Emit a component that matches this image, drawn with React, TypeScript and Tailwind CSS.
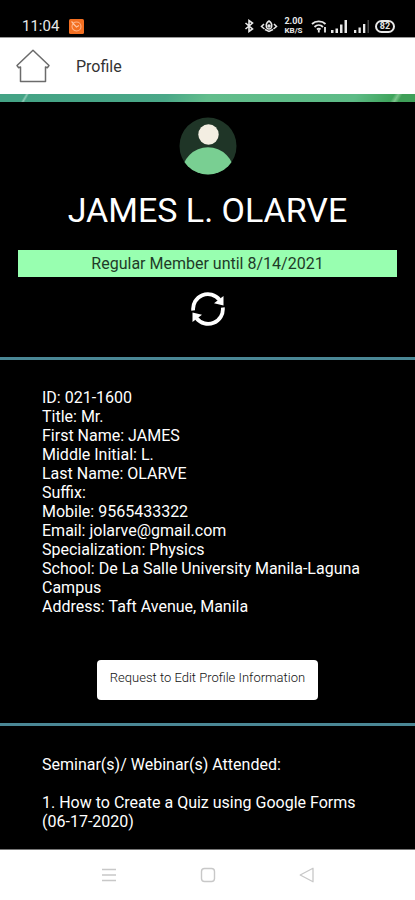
import React from 'react';

interface Member {
  id: string;
  title: string;
  firstName: string;
  middleInitial: string;
  lastName: string;
  suffix: string;
  mobile: string;
  email: string;
  specialization: string;
  school: string;
  address: string;
  validUntil: string;
}

const member: Member = {
  id: '021-1600',
  title: 'Mr.',
  firstName: 'JAMES',
  middleInitial: 'L.',
  lastName: 'OLARVE',
  suffix: '',
  mobile: '9565433322',
  email: 'jolarve@gmail.com',
  specialization: 'Physics',
  school: 'De La Salle University Manila-Laguna Campus',
  address: 'Taft Avenue, Manila',
  validUntil: '8/14/2021',
};

const seminars = [{ name: 'How to Create a Quiz using Google Forms', date: '06-17-2020' }];

const StatusBar: React.FC = () => (
  <div className="h-[37px] shrink-0 bg-black text-[#e8e8e8] flex items-end justify-between pl-[22px] pr-5 pb-0.5">
    <div className="flex items-center gap-2.5 h-[18px]">
      <span className="text-[15px] leading-[18px]">11:04</span>
      <svg width="15" height="15" viewBox="0 0 15 15" fill="none">
        <rect width="15" height="15" rx="1.5" fill="#f36f21" />
        <circle cx="7.5" cy="7.5" r="4.5" stroke="#ffb184" strokeWidth="1.1" />
        <path d="M4 4.5l3.5 3.5 2.5-1.5M2.5 2.5l2 2" stroke="#ffc6a4" strokeWidth="1.1" />
      </svg>
    </div>

    <div className="flex items-center h-[18px]">
      {/* Bluetooth */}
      <svg width="10" height="14" viewBox="0 0 10 14" fill="none" stroke="currentColor" strokeWidth="1.6">
        <path d="M1.500 4l7 6L5 12.500v-11L8.500 4l-7 6" />
      </svg>
      {/* Eye comfort */}
      <svg className="ml-1.5" width="18" height="14" viewBox="0 0 18 14" fill="none" stroke="currentColor" strokeWidth="1.5">
        <path d="M4 5L1.500 7.500 4.500 10M14 5l2.500 2.500-3 2.500M5 10.500L9 12.500l4-2" />
        <path d="M9 2C6.500 3.500 6 5.500 6.300 7.500S8 10 9 10s2.400-.5 2.700-2.500S11.500 3.500 9 2z" />
        <circle cx="9" cy="7" r="1" />
      </svg>
      {/* Network speed */}
      <div className="ml-1.5 w-[19px] text-center font-bold">
        <div className="text-[9px] leading-[9px]">2.00</div>
        <div className="text-[8px] leading-[9px]">KB/S</div>
      </div>
      {/* Wifi */}
      <svg className="ml-2" width="16" height="13" viewBox="0 0 16 13" fill="none" stroke="currentColor" strokeWidth="1.8">
        <path d="M1 4C4.500.5 11 .5 14.500 4M3.500 7c2.500-2.500 6-2.500 8.500 0M6 9.500c1-1 2.500-1 3.500 0" />
        <path d="M7.800 9.500v3M14 7v5.500" />
      </svg>
      {/* Signal bars */}
      <svg className="ml-1" width="17" height="13" viewBox="0 0 17 13" fill="currentColor">
        <path d="M0 10h2.500v3H0zM4.500 8.500H7V13H4.500zM9 4.500h2.500V13H9zM13.500 0H16v13h-2.500z" />
      </svg>
      <svg className="ml-1.5" width="15" height="13" viewBox="0 0 15 13" fill="currentColor">
        <path d="M0 10h2.300v3H0zM4.500 7.500h2.300V13H4.500zM9 4h2.300v9H9z" />
        <path d="M13.500 0H15v13h-1.500z" opacity=".3" />
      </svg>
      {/* Battery */}
      <div className="ml-1.5 w-5 h-[13px] rounded-full border-2 border-current flex items-center justify-center">
        <span className="text-[9px] leading-[9px] font-bold">82</span>
      </div>
    </div>
  </div>
);

const Avatar: React.FC = () => (
  <svg width="58" height="58" viewBox="0 0 58 58" role="img" aria-label="Avatar">
    <defs>
      <clipPath id="avatar-clip">
        <circle cx="29" cy="29" r="28.500" />
      </clipPath>
    </defs>
    <circle cx="29" cy="29" r="28.500" fill="#1f3527" />
    <circle cx="29.500" cy="17.500" r="10.200" fill="#f3eee2" />
    <circle cx="29" cy="56.500" r="26.200" fill="#79cf92" clipPath="url(#avatar-clip)" />
  </svg>
);

const DetailRow: React.FC<{ label: string; value: string }> = ({ label, value }) => (
  <div>
    <dt className="inline">{label}: </dt>
    <dd className="inline">{value}</dd>
  </div>
);

const NavBar: React.FC = () => (
  <nav className="h-[51px] shrink-0 bg-white border-t border-[#777777] flex items-center justify-center gap-[83px] text-[#c8c8c8]">
    <button aria-label="Recent apps">
      <svg width="16" height="16" viewBox="0 0 16 16" stroke="currentColor" strokeWidth="1.3">
        <path d="M1 2.500h14M1 8h14M1 13.500h14" />
      </svg>
    </button>
    <button aria-label="Home screen">
      <svg width="16" height="16" viewBox="0 0 16 16" fill="none" stroke="currentColor" strokeWidth="1.4">
        <rect x="1.500" y="1.500" width="13" height="13" rx="3" />
      </svg>
    </button>
    <button aria-label="Back">
      <svg width="16" height="16" viewBox="0 0 16 16" fill="none" stroke="currentColor" strokeWidth="1.3" strokeLinejoin="round">
        <path d="M14 1.200v13.600L1.200 8z" />
      </svg>
    </button>
  </nav>
);

const App: React.FC = () => {
  const fullName = `${member.firstName} ${member.middleInitial} ${member.lastName}`;

  return (
    <div className="min-h-screen flex flex-col bg-black text-white font-['Roboto',sans-serif]">
      <StatusBar />

      <header className="h-[57px] shrink-0 bg-white border-t border-[#999999] flex items-center gap-[26px] pl-4">
        <a href="#home" aria-label="Home">
          <svg width="34" height="34" viewBox="0 0 34 34" fill="none" stroke="#6b6b6b" strokeWidth="1.5" strokeLinejoin="round">
            <path d="M17 1.200L1 16.500l1.500 2.200L4.500 18v14.500h25V18l2 .7 1.500-2.200z" />
          </svg>
        </a>
        <span className="pt-0.5 text-base text-[#333333]">Profile</span>
      </header>
      <div className="h-2 shrink-0 bg-[linear-gradient(120deg,#44a385_6%,#8cc9b4_6.500%,#44a385_7%,#4aa888_40%,#62bd8c_50%,#5dbb86_85%,#3fa45c_94%,#7cc58c_95%,#3f9f58_96%)]" />

      <main className="flex-1">
        <section className="flex flex-col items-center px-[18px] pt-[15px] pb-[31px] border-b-3 border-[#4a8795]">
          <Avatar />
          <h1 className="mt-[13px] text-[34px] leading-11">{fullName}</h1>
          <p className="mt-[18px] w-full h-[27px] bg-[#98ffb0] text-[#1f3b28] text-center text-base leading-7">
            Regular Member until {member.validUntil}
          </p>
          <button className="mt-[15px]" aria-label="Refresh">
            <svg width="34" height="34" viewBox="0 0 34 34" fill="none">
              <path d="M2.200 18.500A14.800 14.800 0 0 1 28.500 7.700M31.800 15.500A14.800 14.800 0 0 1 5.500 26.300" stroke="white" strokeWidth="3.800" />
              <path d="M32.500 4v9.500L23 11.200zM1.500 30v-9.500l9.500 2.300z" fill="white" />
            </svg>
          </button>
        </section>

        <section className="flex flex-col items-center px-[42px] pt-7 pb-[23px] border-b-3 border-[#4a8795]">
          <dl className="w-full text-base leading-[19px]">
            <DetailRow label="ID" value={member.id} />
            <DetailRow label="Title" value={member.title} />
            <DetailRow label="First Name" value={member.firstName} />
            <DetailRow label="Middle Initial" value={member.middleInitial} />
            <DetailRow label="Last Name" value={member.lastName} />
            <DetailRow label="Suffix" value={member.suffix} />
            <DetailRow label="Mobile" value={member.mobile} />
            <DetailRow label="Email" value={member.email} />
            <DetailRow label="Specialization" value={member.specialization} />
            <DetailRow label="School" value={member.school} />
            <DetailRow label="Address" value={member.address} />
          </dl>
          <button className="mt-11 h-10 px-[13px] pb-1 rounded bg-white text-[#111111] text-[13px] font-light">
            Request to Edit Profile Information
          </button>
        </section>

        <section className="px-[42px] pt-[29px] pb-[18px] text-base leading-[19px]">
          <h2>Seminar(s)/ Webinar(s) Attended:</h2>
          <ol className="mt-[19px]">
            {seminars.map((seminar, index) => (
              <li key={seminar.name}>
                {index + 1}. {seminar.name} ({seminar.date})
              </li>
            ))}
          </ol>
        </section>
      </main>

      <NavBar />
    </div>
  );
};

export default App;
